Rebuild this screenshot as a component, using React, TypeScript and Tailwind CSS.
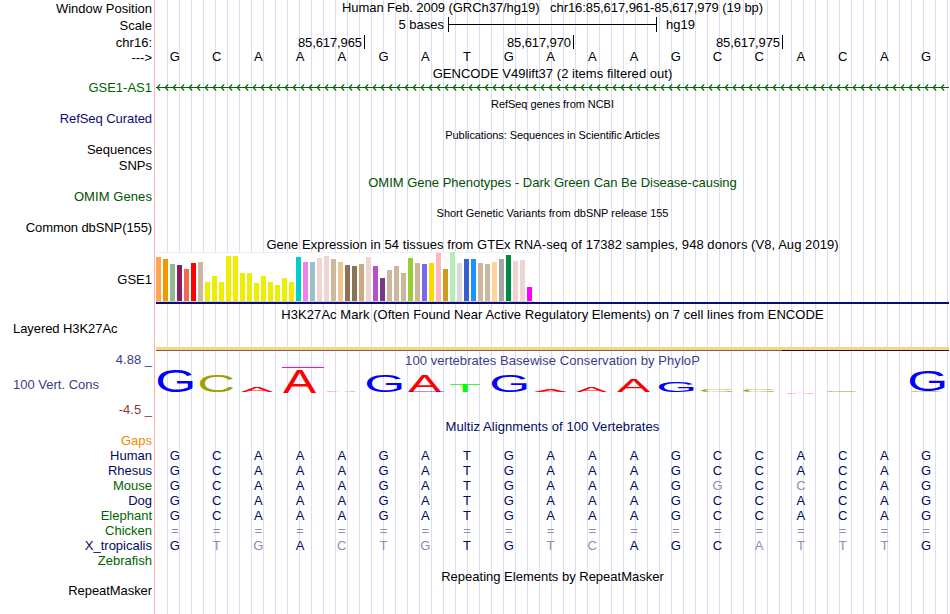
type Label = { text: string; className: string };

const labels: Label[] = [
  { text: 'Window Position', className: 'h-[17px]' },
  { text: 'Scale', className: 'h-[17px]' },
  { text: 'chr16:', className: 'h-[15px]' },
  { text: '--->', className: 'h-[30px]' },
  { text: 'GSE1-AS1', className: 'h-[31px] text-[#006400]' },
  { text: 'RefSeq Curated', className: 'h-[31px] text-[#0c0c78] tracking-[-0.07px]' },
  { text: 'Sequences', className: 'h-4' },
  { text: 'SNPs', className: 'h-[31px]' },
  { text: 'OMIM Genes', className: 'h-[31px] text-[#005000] tracking-[0.08px]' },
  { text: 'Common dbSNP(155)', className: 'h-[52px] tracking-[-0.1px]' },
  { text: 'GSE1', className: 'h-[49px]' },
  { text: 'Layered H3K27Ac', className: 'h-[31px] text-left pl-[13px] tracking-[-0.07px]' },
  { text: '4.88 _', className: 'h-[25px] text-[#3c3c8c]' },
  { text: '100 Vert. Cons', className: 'h-[25px] text-left pl-[13px] text-[#3c3c8c]' },
  { text: '-4.5 _', className: 'h-[31px] text-[#8c3c3c]' },
  { text: 'Gaps', className: 'h-[15px] text-[#f08c00]' },
  { text: 'Human', className: 'h-[15px] text-[#000a64]' },
  { text: 'Rhesus', className: 'h-[15px] text-[#000a64]' },
  { text: 'Mouse', className: 'h-[15px] text-[#006400]' },
  { text: 'Dog', className: 'h-[15px] text-[#000a64]' },
  { text: 'Elephant', className: 'h-[15px] text-[#006400]' },
  { text: 'Chicken', className: 'h-[15px] text-[#006400]' },
  { text: 'X_tropicalis', className: 'h-[15px] text-[#000a64]' },
  { text: 'Zebrafish', className: 'h-[30px] text-[#006400]' },
  { text: 'RepeatMasker', className: 'h-[15px] tracking-[-0.07px]' },
];

const reference = 'GCAAAGATGAAAGCCACAG';

// lower case = base differs from human, drawn faded
const alignments = [
  'GCAAAGATGAAAGCCACAG',
  'GCAAAGATGAAAGCCACAG',
  'GCAAAGATGAAAGgCcCAG',
  'GCAAAGATGAAAGCCACAG',
  'GCAAAGATGAAAGCCACAG',
  '===================',
  'GtgActgTGtcAGCatttG',
];

// [height, colour] for each GTEx tissue
const tissues: [number, string][] = [
  [44, '#ffa54f'], [42, '#ee9a00'], [37, '#8fbc8f'], [36, '#8b1c62'], [32, '#ee6a50'], [38, '#ff0000'],
  [39, '#cdb79e'], [19, '#eeee00'], [25, '#eeee00'], [19, '#eeee00'], [45, '#eeee00'], [45, '#eeee00'],
  [28, '#eeee00'], [28, '#eeee00'], [18, '#eeee00'], [25, '#eeee00'], [19, '#eeee00'], [16, '#eeee00'],
  [23, '#eeee00'], [19, '#eeee00'], [44, '#00cdcd'], [39, '#ee82ee'], [39, '#9ac0cd'], [43, '#eed5d2'],
  [45, '#eed5d2'], [42, '#cdb79e'], [39, '#eec591'], [36, '#8b7355'], [35, '#8b7355'], [37, '#cdaa7d'],
  [44, '#eed5d2'], [35, '#b452cd'], [23, '#7a378b'], [31, '#cdb79e'], [35, '#cdb79e'], [28, '#cdb79e'],
  [43, '#9acd32'], [38, '#cdb79e'], [37, '#7a67ee'], [38, '#ffd700'], [48, '#ffb6c1'], [32, '#cd9b1d'],
  [49, '#b4eeb4'], [38, '#d9d9d9'], [42, '#3a5fcd'], [42, '#1e90ff'], [38, '#cdb79e'], [37, '#cdb79e'],
  [39, '#ffd39b'], [42, '#a6a6a6'], [46, '#008b45'], [40, '#eed5d2'], [41, '#eed5d2'], [14, '#ff00ff'],
];

// glyph bounds in em: left, right, top, bottom
const glyphs: Record<string, [number, number, number, number]> = {
  G: [0.051, 0.714, 0.698, 0.01],
  C: [0.051, 0.68, 0.698, 0.01],
  A: [0.002, 0.665, 0.688, 0],
  T: [0.021, 0.59, 0.688, 0],
};

const baseColors: Record<string, string> = { G: '#0000ff', C: '#a0a000', A: '#ff0000', T: '#00ff00' };

// base, left, right, top, bottom
const logo: [string, number, number, number, number][] = [
  ['G', 2, 37, 16.5, 39],
  ['C', 44, 77, 21.5, 39],
  ['A', 85, 117, 34, 39],
  ['A', 127, 160, 16.5, 40],
  ['A', 169, 201, 38, 39],
  ['G', 211, 246, 21.5, 39],
  ['A', 252, 285, 22.5, 39],
  ['T', 294, 324, 32, 39],
  ['G', 336, 371, 22.5, 39],
  ['A', 378, 411, 37, 39],
  ['A', 420, 451, 34, 39],
  ['A', 461, 494, 27, 39],
  ['G', 503, 538, 28, 39],
  ['C', 545, 577, 36, 39],
  ['C', 587, 619, 37, 39],
  ['A', 629, 659, 40, 41],
  ['C', 670, 702, 38, 39],
  ['G', 754, 789, 17.5, 38],
  ['C', 755, 786, 38, 39],
];

const Title = ({ text, className }: { text: string; className: string }) => (
  <div className={`shrink-0 text-center whitespace-pre ${className}`}>{text}</div>
);

const Bases = ({ bases, className }: { bases: string; className: string }) => (
  <div className={`-ml-[2px] grid w-[793px] shrink-0 grid-cols-19 text-center ${className}`}>
    {bases.split('').map((base, i) => (
      <span key={i} className={base === base.toUpperCase() && base !== '=' ? '' : 'text-[#8c8cb4]'}>
        {base.toUpperCase()}
      </span>
    ))}
  </div>
);

const Ruler = () => (
  <div className="flex h-[14px] shrink-0">
    {['85,617,965', '85,617,970', '85,617,975'].map((pos) => (
      <div key={pos} className="w-[209px] border-r border-black pr-[2px] text-right tracking-[-0.1px]">
        {pos}
      </div>
    ))}
  </div>
);

const ScaleBar = () => (
  <div className="flex h-[18px] shrink-0">
    <span className="w-72 text-right">5 bases</span>
    <div className="ml-1 flex h-[15px] w-[209px] items-center border-x border-black">
      <div className="h-px w-full bg-black" />
    </div>
    <span className="ml-[9px]">hg19</span>
  </div>
);

const GeneArrows = () => (
  <svg width="793" height="16" className="shrink-0">
    <path d="M0 6.5H793" stroke="#006400" />
    {Array.from({ length: 99 }, (_, i) => (
      <path key={i} d={`M${i * 8 + 4.2} 3.5l-3 3l3 3`} stroke="#006400" strokeWidth="1.1" fill="none" />
    ))}
  </svg>
);

const Expression = () => (
  <div className="flex h-[50px] w-[378px] shrink-0 items-end gap-[2px] border-t border-b border-t-[#f0f0f0] border-b-[#d0d0d0] bg-white">
    {tissues.map(([height, color], i) => (
      <div key={i} className="w-[5px] shrink-0" style={{ height, backgroundColor: color }} />
    ))}
  </div>
);

const ConservationLogo = () => (
  <svg width="793" height="51" className="shrink-0" fontFamily="Liberation Sans, Arial, sans-serif">
    {logo.map(([base, left, right, top, bottom], i) => {
      const [gl, gr, gt, gb] = glyphs[base];
      const sx = (right - left) / (gr - gl) / 100;
      const sy = (bottom - top) / (gt + gb) / 100;
      return (
        <text
          key={i}
          fontSize="100"
          fill={baseColors[base]}
          transform={`matrix(${sx} 0 0 ${sy} ${left - gl * 100 * sx} ${bottom - gb * 100 * sy})`}
        >
          {base}
        </text>
      );
    })}
    <rect x="126" y="14" width="42" height="1" fill="#ff00ff" />
    <rect x="254" y="38" width="34" height="1" fill="#0000ff" fillOpacity="0.4" />
  </svg>
);

export default function App() {
  return (
    <div className="flex h-[614px] w-[950px] overflow-hidden bg-white font-['Liberation_Sans',Arial,sans-serif] text-[13px] leading-[15px] text-black">
      {/* Track labels */}
      <div className="w-[155px] shrink-0 border-r border-[#ffb4b4] pt-px pr-[2px] text-right">
        {labels.map(({ text, className }) => (
          <div key={text} className={`whitespace-nowrap ${className}`}>
            {text}
          </div>
        ))}
      </div>

      {/* Tracks */}
      <div className="ml-px flex w-[793px] shrink-0 flex-col bg-[repeating-linear-gradient(to_right,transparent_0px,transparent_11px,#dcdcf8_11px,#dcdcf8_12px)]">
        <Title
          text="Human Feb. 2009 (GRCh37/hg19)   chr16:85,617,961-85,617,979 (19 bp)"
          className="h-[17px] tracking-[-0.07px]"
        />
        <ScaleBar />
        <Ruler />
        <Bases bases={reference} className="h-[17px]" />
        <Title text="GENCODE V49lift37 (2 items filtered out)" className="h-[15px] tracking-[0.03px]" />
        <GeneArrows />
        <Title text="RefSeq genes from NCBI" className="h-[31px] text-[11px] leading-[15px] tracking-[-0.06px]" />
        <Title
          text="Publications: Sequences in Scientific Articles"
          className="h-[47px] text-[11px] leading-[15px] tracking-[-0.07px]"
        />
        <Title text="OMIM Gene Phenotypes - Dark Green Can Be Disease-causing" className="h-[31px] text-[#005000]" />
        <Title
          text="Short Genetic Variants from dbSNP release 155"
          className="h-[31px] text-[11px] leading-[15px] tracking-[-0.03px]"
        />
        <Title
          text="Gene Expression in 54 tissues from GTEx RNA-seq of 17382 samples, 948 donors (V8, Aug 2019)"
          className="h-[15px] tracking-[0.055px]"
        />
        <Expression />
        <div className="mb-[3px] h-[2px] shrink-0 bg-[#0c0c78]" />
        <Title
          text="H3K27Ac Mark (Often Found Near Active Regulatory Elements) on 7 cell lines from ENCODE"
          className="h-10 tracking-[0.055px]"
        />
        <div className="h-[3px] shrink-0 bg-[#fed283]" />
        <div className="mb-[2px] flex h-px shrink-0">
          <div className="w-[626px] bg-[#7a5c50]" />
          <div className="flex-1 bg-[#2c0a4c]" />
        </div>
        <Title
          text="100 vertebrates Basewise Conservation by PhyloP"
          className="h-[15px] text-[#3c3c8c] tracking-[0.06px]"
        />
        {/* the logo's y scale starts at the top of the title */}
        <div className="-mt-[15px] h-[66px] shrink-0">
          <ConservationLogo />
        </div>
        <Title text="Multiz Alignments of 100 Vertebrates" className="h-[29px] text-[#000a64] tracking-[0.08px]" />
        {alignments.map((bases, i) => (
          <Bases key={i} bases={bases} className="h-[15px] text-[#000a64]" />
        ))}
        <Title text="Repeating Elements by RepeatMasker" className="mt-4 h-[15px]" />
      </div>
    </div>
  );
}
